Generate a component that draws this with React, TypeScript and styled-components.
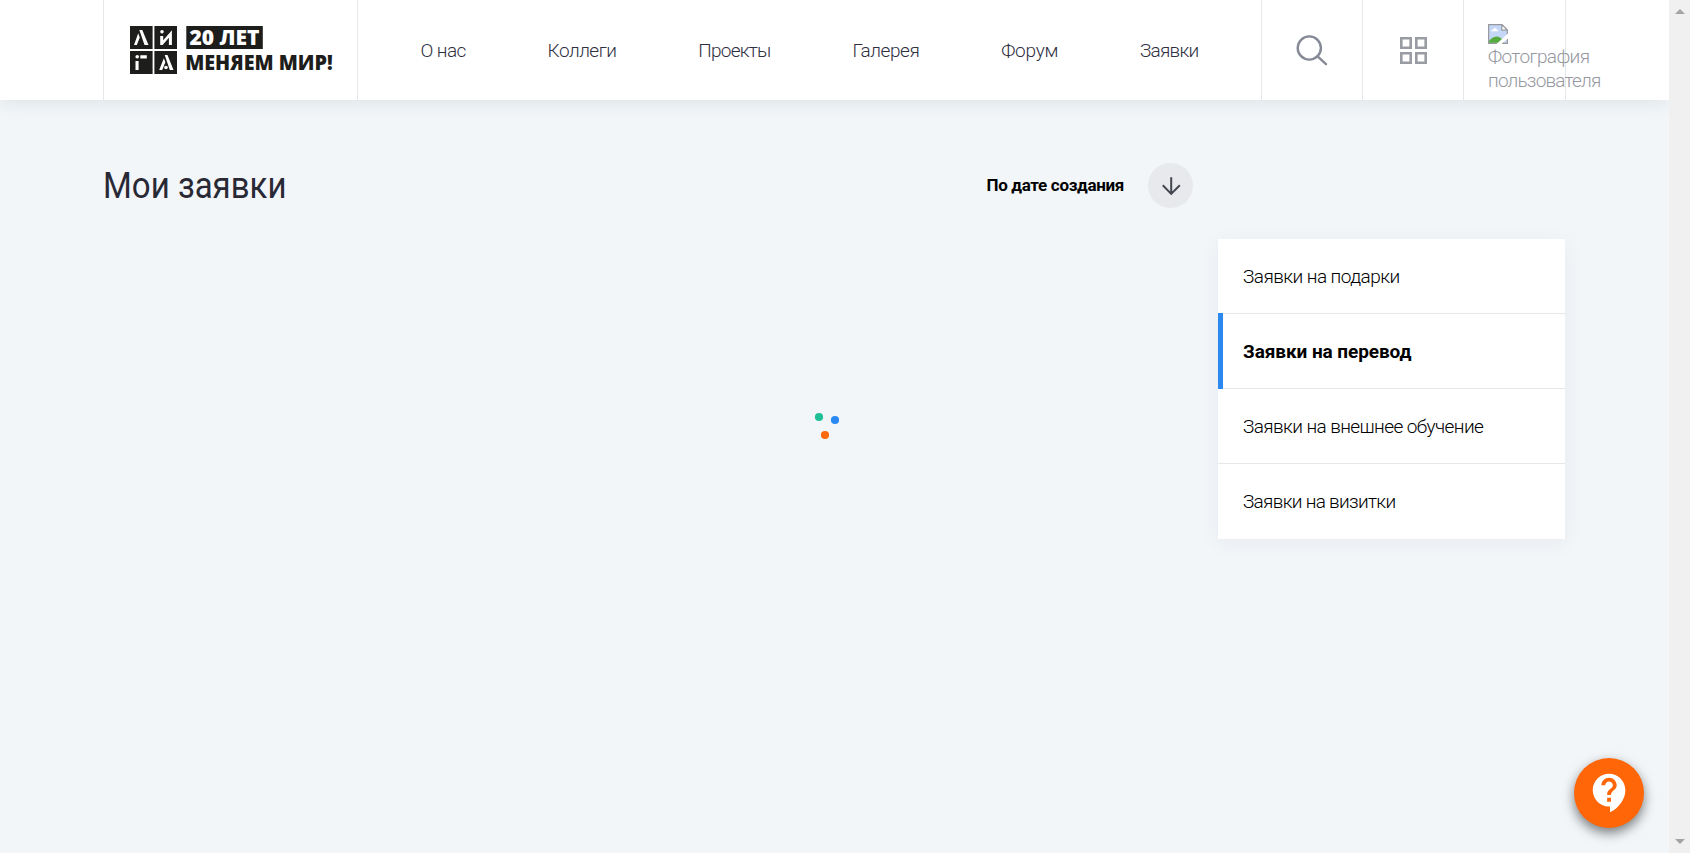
import React from 'react';
import styled, { createGlobalStyle } from 'styled-components';

const GlobalStyle = createGlobalStyle`
  *, *::before, *::after { box-sizing: border-box; }
  body { margin: 0; overflow: hidden; background: #f2f6f9; font-family: Roboto, "Liberation Sans", sans-serif; }
`;

const Page = styled.div`
  display: flex;
  height: 853px;
`;

const Viewport = styled.div`
  flex: 1;
  min-width: 0;
  overflow: hidden;
`;

const Header = styled.header`
  height: 100px;
  padding: 0 103px;
  background: #fff;
  box-shadow: 0 0 20px rgba(33, 48, 60, 0.12);
`;

const HeaderInner = styled.div`
  display: flex;
  height: 100%;
  width: 1463px;
  border-left: 1px solid #e5e8eb;
  border-right: 1px solid #e5e8eb;
`;

const LogoLink = styled.a`
  width: 254px;
  padding: 20px 0 0 25px;
  border-right: 1px solid #e5e8eb;

  svg { display: block; overflow: visible; }
`;

const LogoText = styled.text`
  font-family: "Open Sans", sans-serif;
  font-weight: 800;
  font-size: 21px;
`;

const Nav = styled.nav`
  flex: 1;
  display: flex;
  align-items: center;
  gap: 81.9px;
  padding: 2px 0 0 62.5px;
`;

const NavLink = styled.a<{ $tracking: number }>`
  font-size: 19px;
  font-weight: 300;
  line-height: 24px;
  letter-spacing: ${(p) => p.$tracking}px;
  color: #2f2f3f;
  white-space: nowrap;
`;

const IconCell = styled.button`
  display: flex;
  align-items: center;
  justify-content: center;
  width: 101px;
  height: 100%;
  padding: 0;
  border: 0;
  border-left: 1px solid #e5e8eb;
  background: none;
`;

const UserCell = styled.a`
  width: 102px;
  padding: 24px 0 0 24px;
  border-left: 1px solid #e5e8eb;
  color: #96989f;
  font-size: 19px;
  font-weight: 300;
  line-height: 24px;

  svg { display: block; margin-bottom: 1px; }
`;

const AltLine = styled.span<{ $tracking: number }>`
  display: block;
  white-space: nowrap;
  letter-spacing: ${(p) => p.$tracking}px;
`;

const Content = styled.main`
  display: grid;
  grid-template-columns: 1090px 347px;
  column-gap: 25px;
  padding: 63px 0 0 103px;
`;

const TitleRow = styled.div`
  display: flex;
  align-items: center;
  justify-content: space-between;
  height: 45px;
`;

const Title = styled.h1`
  margin: 0;
  font-size: 36px;
  font-weight: 400;
  line-height: 46px;
  transform: scaleX(0.917);
  transform-origin: left center;
  color: #292936;
`;

const Sort = styled.div`
  display: flex;
  align-items: center;
  gap: 24px;
  font-size: 17px;
  font-weight: 700;
  letter-spacing: -0.33px;
  color: #000;
`;

const SortLabel = styled.span`
  padding-bottom: 2px;
`;

const SortButton = styled.button`
  display: flex;
  align-items: center;
  justify-content: center;
  width: 45px;
  height: 45px;
  padding: 0;
  border: 0;
  border-radius: 50%;
  background: #e8e9ed;
`;

const LoaderWrap = styled.div`
  grid-column: 1;
  padding: 204px 0 0 711px;

  svg { display: block; }
`;

const SideMenu = styled.ul`
  grid-column: 2;
  grid-row: 2;
  align-self: start;
  margin: 31px 0 0;
  padding: 0;
  height: 300px;
  list-style: none;
  background: #fff;
  box-shadow: 0 4px 20px rgba(33, 48, 60, 0.05);
`;

const SideItem = styled.li<{ $active?: boolean; $tracking: number }>`
  position: relative;
  height: 75px;
  padding-left: 25px;
  border-bottom: 1px solid #e5e7eb;
  line-height: 75px;
  font-size: 19px;
  font-weight: ${(p) => (p.$active ? 700 : 300)};
  letter-spacing: ${(p) => p.$tracking}px;
  color: #000;

  &:last-child { border-bottom: 0; }

  &::before {
    content: '';
    display: ${(p) => (p.$active ? 'block' : 'none')};
    position: absolute;
    left: 0;
    top: -1px;
    width: 5px;
    height: 76px;
    background: #2a88f0;
  }
`;

const HelpButton = styled.button`
  position: fixed;
  left: 1574px;
  top: 758px;
  display: flex;
  align-items: center;
  justify-content: center;
  width: 70px;
  height: 70px;
  padding: 0 0 0 2px;
  border: 0;
  border-radius: 50%;
  background: #ff6608;
  box-shadow: 0 5px 12px rgba(0, 0, 0, 0.5);
`;

const ScrollTrack = styled.div`
  display: flex;
  flex-direction: column;
  align-items: center;
  justify-content: space-between;
  width: 21px;
  padding: 9px 0;
  background: #f0f0f0;
`;

const NAV = [
  { label: 'О нас', tracking: -0.6 },
  { label: 'Коллеги', tracking: -0.5 },
  { label: 'Проекты', tracking: -0.75 },
  { label: 'Галерея', tracking: -0.45 },
  { label: 'Форум', tracking: -0.25 },
  { label: 'Заявки', tracking: -0.75 },
];

const MENU = [
  { label: 'Заявки на подарки', tracking: -0.55 },
  { label: 'Заявки на перевод', tracking: -0.08, active: true },
  { label: 'Заявки на внешнее обучение', tracking: -0.59 },
  { label: 'Заявки на визитки', tracking: -0.7 },
];

function Logo() {
  return (
    <svg width="216" height="60" viewBox="129 20 216 60">
      <g fill="#1d1d1b">
        <path d="M130 26h22.6v23H130zM154.4 26H177v23h-22.6zM130 51h22.6v23H130zM154.4 51H177v23h-22.6zM186.3 26h76.5v23h-76.5z" />
        <LogoText x="185.2" y="70" textLength="147.5" lengthAdjust="spacingAndGlyphs">МЕНЯЕМ МИР!</LogoText>
      </g>
      <g fill="#fff">
        <LogoText x="189.5" y="45" textLength="70" lengthAdjust="spacingAndGlyphs">20 ЛЕТ</LogoText>
        <path d="M139.3 30h3l6.2 15h-4zM138.2 33.3l1.6 4.1-3 7.6H134z" />
        <circle cx="162" cy="31.8" r="1.8" />
        <path d="M160.2 36h3v4.3l8.7-10V45h-3v-7.2L162.6 45h-2.4z" />
        <circle cx="137.2" cy="56.8" r="1.8" />
        <path d="M135.5 61h3.1v9h-3.1zM140.3 55.3h6.5v3.2h-6.5z" />
        <path d="M164.7 55h2.8l6 15h-3.7zM163.8 58.3l1.6 4-3.2 7.7h-3z" />
        <circle cx="166" cy="67.5" r="1.8" />
      </g>
    </svg>
  );
}

function BrokenImage() {
  return (
    <svg width="20" height="20" viewBox="0 0 20 20">
      <path d="M.6.6h13.2l5.6 5.6v13.2H.6z" fill="#c5d7f7" stroke="#96989c" strokeWidth="1.2" />
      <path d="M13.8.6v5.6h5.6z" fill="#fff" stroke="#96989c" strokeWidth="1.2" />
      <path d="M3 7.3q0-1.6 1.8-1.6Q5.4 4 7 4q1.8 0 2.1 1.9 1.4.1 1.4 1.4z" fill="#fff" />
      <path d="M1.2 18.8v-2.1Q5 12.5 9 12.5q4 0 7.2 6.3z" fill="#55ac3d" />
      <path d="M20 9.5v5L13.5 20H8.5z" fill="#fff" />
    </svg>
  );
}

export default function App() {
  return (
    <Page>
      <GlobalStyle />
      <Viewport>
        <Header>
          <HeaderInner>
            <LogoLink><Logo /></LogoLink>
            <Nav>
              {NAV.map((n) => <NavLink key={n.label} $tracking={n.tracking}>{n.label}</NavLink>)}
            </Nav>
            <IconCell aria-label="Поиск">
              <svg width="34" height="34" viewBox="0 0 34 34" fill="none" stroke="#858a96" strokeWidth="2.4">
                <circle cx="14.3" cy="15" r="11.6" />
                <path d="M22.6 23.3l8.4 7.9" strokeLinecap="round" />
              </svg>
            </IconCell>
            <IconCell aria-label="Сервисы">
              <svg width="28" height="28" viewBox="0 0 28 28" fill="none" stroke="#999ca3" strokeWidth="2.6">
                <path d="M2.3 2.3h9.4v9.4H2.3zM17.3 2.3h9.4v9.4h-9.4zM2.3 17.3h9.4v9.4H2.3zM17.3 17.3h9.4v9.4h-9.4z" />
              </svg>
            </IconCell>
            <UserCell>
              <BrokenImage />
              <AltLine $tracking={-0.6}>Фотография</AltLine>
              <AltLine $tracking={-0.8}>пользователя</AltLine>
            </UserCell>
          </HeaderInner>
        </Header>
        <Content>
          <TitleRow>
            <Title>Мои заявки</Title>
            <Sort>
              <SortLabel>По дате создания</SortLabel>
              <SortButton aria-label="Порядок сортировки">
                <svg width="22" height="22" viewBox="0 0 22 22" fill="none" stroke="#44464f" strokeWidth="2">
                  <path d="M11.2 2.2v17M2.8 10.3l8.4 8.6 8.6-8.6" />
                </svg>
              </SortButton>
            </Sort>
          </TitleRow>
          <LoaderWrap>
            <svg width="26" height="28" viewBox="0 0 26 28">
              <circle cx="5" cy="5" r="4.1" fill="#20bf96" />
              <circle cx="21" cy="8" r="4.1" fill="#2a88f0" />
              <circle cx="11" cy="23" r="4.1" fill="#ff6a0a" />
            </svg>
          </LoaderWrap>
          <SideMenu>
            {MENU.map((m) => (
              <SideItem key={m.label} $active={m.active} $tracking={m.tracking}>{m.label}</SideItem>
            ))}
          </SideMenu>
        </Content>
        <HelpButton aria-label="Помощь">
          <svg width="46" height="46" viewBox="0 0 24 24" fill="#fff">
            <path d="M11.5 2C6.81 2 3 5.81 3 10.5S6.81 19 11.5 19h.5v3c4.86-2.34 8-7 8-11.5C20 5.81 16.19 2 11.5 2zm1 14.5h-2v-2h2v2zm0-3.5h-2c0-3.25 3-3 3-5 0-1.1-.9-2-2-2s-2 .9-2 2h-2c0-2.21 1.79-4 4-4s4 1.79 4 4c0 2.5-3 2.75-3 5z" />
          </svg>
        </HelpButton>
      </Viewport>
      <ScrollTrack>
        <svg width="10" height="5" viewBox="0 0 10 5"><path d="M0 5l5-5 5 5z" fill="#a3a3a3" /></svg>
        <svg width="10" height="5" viewBox="0 0 10 5"><path d="M0 0l5 5 5-5z" fill="#a3a3a3" /></svg>
      </ScrollTrack>
    </Page>
  );
}
